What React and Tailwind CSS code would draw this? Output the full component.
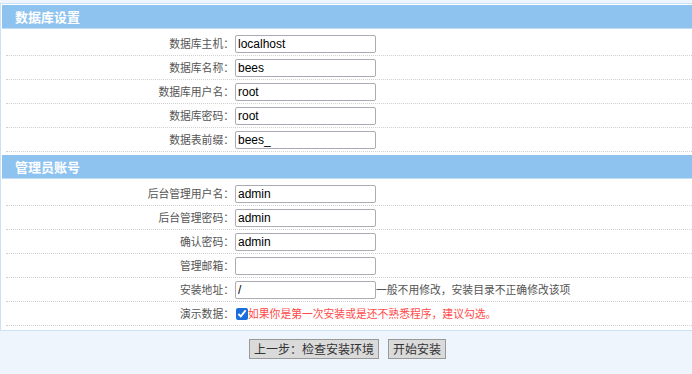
import React from "react";

const cjk = { fontFamily: '"Noto Sans CJK SC", "Liberation Sans", sans-serif' };

function Section({ title, children }) {
  return (
    <div>
      <div className="h-[24px] bg-[#8ec3f0] border-b border-[#c3ddf4] mb-[3px] flex items-center pl-[13px] text-white font-bold text-[13px]">
        {title}
      </div>
      {children}
    </div>
  );
}

function Row({ label, children }) {
  return (
    <div className="h-[24px] ml-[4px] border-b border-dotted border-[#d0d0d0] flex items-center">
      <div className="w-[228px] text-right text-[10.8px] text-[#555]">{label}：</div>
      <div className="ml-px flex items-center">{children}</div>
    </div>
  );
}

function Field({ value }) {
  return (
    <input
      defaultValue={value}
      className="w-[141px] h-[18px] border border-[#ababb3] rounded-[2px] px-[2px] text-[12px] text-black bg-white outline-none"
      style={{ fontFamily: '"Liberation Sans", Arial, sans-serif' }}
    />
  );
}

export default function App() {
  return (
    <div className="w-[692px] h-[374px] bg-[#eef5fc] overflow-hidden pt-[3px]" style={cjk}>
      <div className="w-[720px] bg-white border border-[#c9e2f7] p-px pb-[4px]">
        <Section title="数据库设置">
          <Row label="数据库主机"><Field value="localhost" /></Row>
          <Row label="数据库名称"><Field value="bees" /></Row>
          <Row label="数据库用户名"><Field value="root" /></Row>
          <Row label="数据库密码"><Field value="root" /></Row>
          <Row label="数据表前缀"><Field value="bees_" /></Row>
        </Section>
        <div className="mt-[3px]">
          <Section title="管理员账号">
            <Row label="后台管理用户名"><Field value="admin" /></Row>
            <Row label="后台管理密码"><Field value="admin" /></Row>
            <Row label="确认密码"><Field value="admin" /></Row>
            <Row label="管理邮箱"><Field value="" /></Row>
            <Row label="安装地址">
              <Field value="/" />
              <span className="text-[10.8px] text-[#555]">一般不用修改，安装目录不正确修改该项</span>
            </Row>
            <Row label="演示数据">
              <input type="checkbox" defaultChecked className="m-0 ml-px w-[12px] h-[12px] accent-[#1a6fdc]" />
              <span className="text-[10.8px] text-[#ff4a4a]">如果你是第一次安装或是还不熟悉程序，建议勾选。</span>
            </Row>
          </Section>
        </div>
      </div>
      <div className="mt-[8px] flex justify-center gap-[9px] pl-[3px]">
        <button className="h-[20px] px-[4px] bg-[#dadada] border border-[#999] text-[12px] text-[#333] leading-none">
          上一步：检查安装环境
        </button>
        <button className="h-[20px] px-[4px] bg-[#dadada] border border-[#999] text-[12px] text-[#333] leading-none">
          开始安装
        </button>
      </div>
    </div>
  );
}
